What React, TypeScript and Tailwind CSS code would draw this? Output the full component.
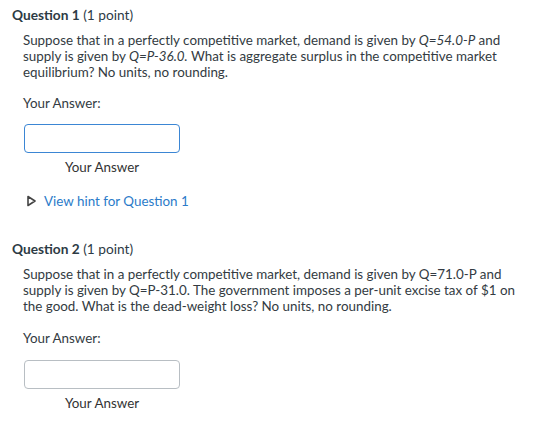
import React from "react";

function AnswerBox({ focused }: { focused?: boolean }) {
  return (
    <div className="w-[157px] pl-[1px]">
      <div
        className={
          focused
            ? "h-[29px] w-[156px] rounded-[4px] border border-[#3b86d4] bg-white"
            : "h-[29px] w-[156px] rounded-[4px] border border-[#b8bec3] bg-white"
        }
      />
      <div className="mt-[6px] text-center text-[13.4px] leading-[16px] text-[#333]">Your Answer</div>
    </div>
  );
}

function Heading({ n }: { n: number }) {
  return (
    <div className="text-[13.7px] leading-[20px] text-[#2d3b45]">
      <span className="font-bold">Question {n}</span> (1 point)
    </div>
  );
}

export default function App() {
  return (
    <div
      className="h-[427px] w-[560px] bg-white px-[12px] pt-[5px] text-[#333b42]"
      style={{ fontFamily: "Lato, 'Open Sans', sans-serif" }}
    >
      <Heading n={1} />
      <div className="pl-[11px]">
        <p className="mt-[7px] whitespace-nowrap text-[13.4px] leading-[16px]">
          Suppose that in a perfectly competitive market, demand is given by <em>Q=54.0-P</em> and
          <br />
          supply is given by <em>Q=P-36.0.</em> What is aggregate surplus in the competitive market
          <br />
          equilibrium? No units, no rounding.
        </p>
        <div className="mt-[15px] text-[13.4px] leading-[16px]">Your Answer:</div>
        <div className="mt-[13px]">
          <AnswerBox focused />
        </div>
        <div className="mt-[18px] flex items-center text-[13.4px] leading-[16px]">
          <svg width="12" height="12" viewBox="0 0 12 12" className="ml-[3px] mr-[6px]">
            <polygon points="2,1.5 9,6 2,10.5" fill="none" stroke="#444" strokeWidth="1.6" strokeLinejoin="round" />
          </svg>
          <span className="text-[#2b7bc9]">View hint for Question 1</span>
        </div>
      </div>
      <div className="mt-[30px]">
        <Heading n={2} />
      </div>
      <div className="pl-[11px]">
        <p className="mt-[7px] whitespace-nowrap text-[13.4px] leading-[16px]">
          Suppose that in a perfectly competitive market, demand is given by Q=71.0-P and
          <br />
          supply is given by Q=P-31.0. The government imposes a per-unit excise tax of $1 on
          <br />
          the good. What is the dead-weight loss? No units, no rounding.
        </p>
        <div className="mt-[16px] text-[13.4px] leading-[16px]">Your Answer:</div>
        <div className="mt-[14px]">
          <AnswerBox />
        </div>
      </div>
    </div>
  );
}
